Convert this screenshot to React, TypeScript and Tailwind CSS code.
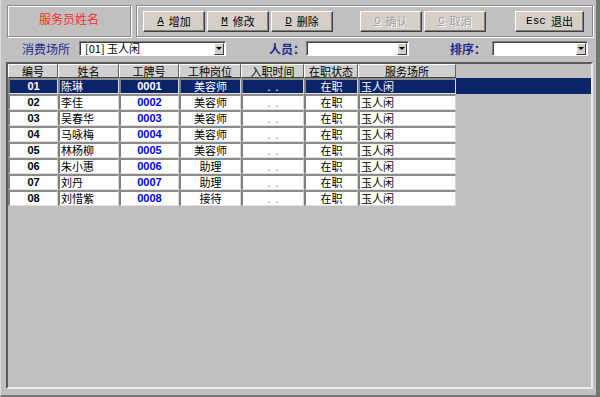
import React from 'react';

interface Staff {
  no: string;
  name: string;
  badge: string;
  job: string;
}

const STAFF: Staff[] = [
  { no: '01', name: '陈琳', badge: '0001', job: '美容师' },
  { no: '02', name: '李佳', badge: '0002', job: '美容师' },
  { no: '03', name: '吴春华', badge: '0003', job: '美容师' },
  { no: '04', name: '马咏梅', badge: '0004', job: '美容师' },
  { no: '05', name: '林杨柳', badge: '0005', job: '美容师' },
  { no: '06', name: '朱小惠', badge: '0006', job: '助理' },
  { no: '07', name: '刘丹', badge: '0007', job: '助理' },
  { no: '08', name: '刘惜紫', badge: '0008', job: '接待' },
];

// column widths: 编号 姓名 工牌号 工种岗位 入职时间 在职状态 服务场所
const COLS = [
  { title: '编号', w: 'w-[50px]' },
  { title: '姓名', w: 'w-[61px]' },
  { title: '工牌号', w: 'w-[60px]' },
  { title: '工种岗位', w: 'w-[62px]' },
  { title: '入职时间', w: 'w-[63px]' },
  { title: '在职状态', w: 'w-[54px]' },
  { title: '服务场所', w: 'w-[98px]' },
];

const ToolButton = ({
  hotkey,
  label,
  disabled,
  underline = true,
  width = 'w-[62px]',
}: {
  hotkey: string;
  label: string;
  disabled?: boolean;
  underline?: boolean;
  width?: string;
}) => (
  <div
    className={`${width} h-[21px] shrink-0 bg-[#d4d0c8] border border-t-white border-l-white border-r-[#404040] border-b-[#404040] shadow-[inset_-1px_-1px_0_#808080] flex items-center justify-center gap-[5px] text-[11px] leading-none ${
      disabled ? 'text-[#a0a0a0] [text-shadow:1px_1px_0_#ffffff]' : 'text-black'
    }`}
  >
    <span className={`font-['Liberation_Mono'] ${underline ? 'underline' : ''}`}>{hotkey}</span>
    <span>{label}</span>
  </div>
);

const Combo = ({ width, value }: { width: string; value?: string }) => (
  <div
    className={`${width} h-[15px] shrink-0 bg-white border border-t-[#808080] border-l-[#808080] border-r-white border-b-white shadow-[inset_1px_1px_0_#404040] flex items-center`}
  >
    <div className="flex-1 pl-[5px] text-[11px] leading-none text-black whitespace-pre">{value}</div>
    <div className="w-[10px] h-[12px] mr-[1px] bg-[#d4d0c8] border border-t-white border-l-white border-r-[#404040] border-b-[#404040] flex items-center justify-center">
      <div className="w-0 h-0 border-l-[3px] border-r-[3px] border-t-[3px] border-l-transparent border-r-transparent border-t-black" />
    </div>
  </div>
);

const Cell = ({
  w,
  sel,
  align = 'center',
  color = 'text-black',
  children,
  className = '',
}: {
  w: string;
  sel: boolean;
  align?: 'center' | 'left';
  color?: string;
  children?: React.ReactNode;
  className?: string;
}) => (
  <div
    className={`${w} h-[16px] shrink-0 border-l-2 border-t-2 border-l-[#808080] border-t-[#8c8c8c] border-r border-b border-r-[#d8d8d8] border-b-[#e0e0e0] flex items-center overflow-hidden whitespace-pre text-[11px] leading-none ${
      align === 'center' ? 'justify-center' : 'justify-start pl-[1px]'
    } ${sel ? 'bg-[#0a246a] text-white' : `bg-white ${color}`} ${className}`}
  >
    {children}
  </div>
);

export default function App() {
  return (
    <div className="w-[600px] h-[397px] bg-[#c0c0c0] border-l border-l-[#dcdcdc] border-r-4 border-r-[#6f786d] border-b-2 border-b-[#7a7a7a] flex flex-col font-['Noto_Sans_CJK_SC',sans-serif] select-none">
      {/* top panels */}
      <div className="mt-[5px] ml-[6px] flex">
        <div className="w-[124px] h-[32px] border border-[#8a8a8a] shadow-[inset_1px_1px_0_#ffffff,1px_1px_0_#ffffff] flex items-center justify-center pb-[4px] text-[12px] text-[#ff2b2b]">
          服务员姓名
        </div>
        <div className="ml-[5px] w-[457px] h-[32px] border border-[#8a8a8a] shadow-[inset_1px_1px_0_#ffffff,1px_1px_0_#ffffff] flex items-start pt-[5px] pl-[6px]">
          <div className="flex gap-[2px]">
            <ToolButton hotkey="A" label="增加" />
            <ToolButton hotkey="M" label="修改" />
            <ToolButton hotkey="D" label="删除" />
          </div>
          <div className="flex gap-[2px] ml-[27px]">
            <ToolButton hotkey="O" label="确认" disabled />
            <ToolButton hotkey="C" label="取消" disabled />
          </div>
          <div className="ml-[29px]">
            <ToolButton hotkey="Esc" label="退出" underline={false} width="w-[69px]" />
          </div>
        </div>
      </div>

      {/* filter row */}
      <div className="mt-[4px] h-[15px] flex items-center pl-[21px] text-[12px] text-[#1f2c8f]">
        <div className="w-[57px] leading-none">消费场所</div>
        <Combo width="w-[147px]" value="[01] 玉人闲" />
        <div className="ml-[43px] w-[37px] leading-none font-bold">人员：</div>
        <Combo width="w-[103px]" />
        <div className="ml-[41px] w-[42px] leading-none font-bold">排序：</div>
        <Combo width="w-[96px]" />
      </div>

      {/* grid */}
      <div className="mt-[6px] mb-[6px] ml-[5px] w-[587px] flex-1 border-2 border-t-[#5a5a5a] border-l-[#5a5a5a] border-r-[#eeeee8] border-b-[#eeeee8] flex flex-col">
        <div className="flex h-[14px]">
          {COLS.map((c) => (
            <div
              key={c.title}
              className={`${c.w} h-[14px] shrink-0 bg-[#d0d0d0] border border-t-white border-l-white border-r-[#606060] border-b-[#404040] flex items-center justify-center text-[11px] leading-none text-black`}
            >
              {c.title}
            </div>
          ))}
        </div>
        {STAFF.map((s, i) => {
          const sel = i === 0;
          return (
            <div key={s.no} className="flex h-[16px]">
              <Cell w={COLS[0].w} sel={sel} className="font-['Liberation_Sans'] font-bold">
                {s.no}
              </Cell>
              <Cell w={COLS[1].w} sel={sel} align="left">
                {s.name}
              </Cell>
              <Cell w={COLS[2].w} sel={sel} color="text-[#0000ff]" className="font-['Liberation_Sans'] font-bold">
                {s.badge}
              </Cell>
              <Cell w={COLS[3].w} sel={sel}>
                {s.job}
              </Cell>
              <Cell w={COLS[4].w} sel={sel} color="text-[#909090]" className="text-[9px]">
                {'.  .'}
              </Cell>
              <Cell w={COLS[5].w} sel={sel}>
                在职
              </Cell>
              <Cell w={COLS[6].w} sel={sel} align="left">
                玉人闲
              </Cell>
              <div className={`flex-1 h-[16px] ${sel ? 'bg-[#0a246a]' : ''}`} />
            </div>
          );
        })}
      </div>
    </div>
  );
}
